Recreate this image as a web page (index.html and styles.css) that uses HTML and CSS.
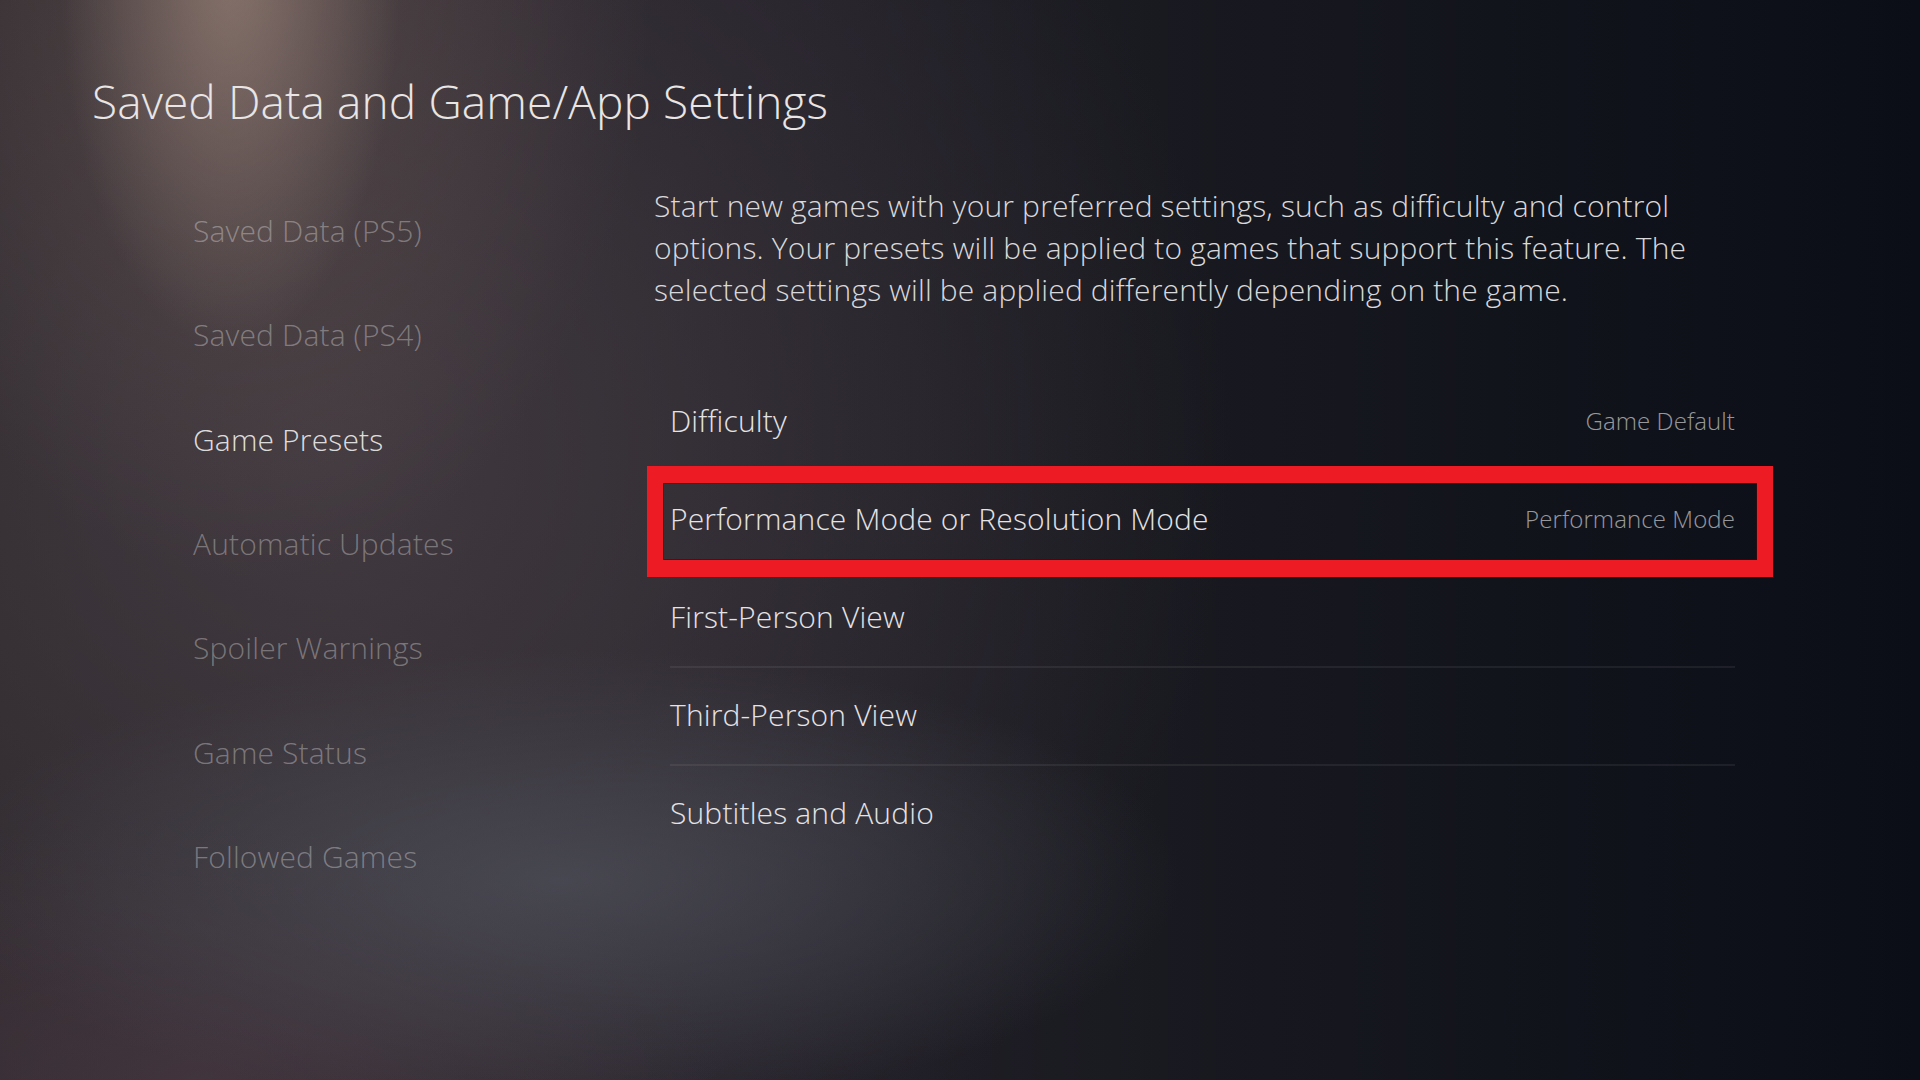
FILE: index.html
```html
<!DOCTYPE html>
<html lang="en">
<head>
<meta charset="utf-8">
<title>Saved Data and Game/App Settings</title>
<link rel="stylesheet" href="styles.css">
</head>
<body>
<div class="screen">
  <h1 class="title">Saved Data and Game/App Settings</h1>
  <div class="content">
    <nav class="side">
      <div class="side-item">Saved Data (PS5)</div>
      <div class="side-item">Saved Data (PS4)</div>
      <div class="side-item is-active">Game Presets</div>
      <div class="side-item">Automatic Updates</div>
      <div class="side-item">Spoiler Warnings</div>
      <div class="side-item">Game Status</div>
      <div class="side-item">Followed Games</div>
    </nav>
    <section class="main">
      <p class="desc">Start new games with your preferred settings, such as difficulty and control options. Your presets will be applied to games that support this feature. The selected settings will be applied differently depending on the game.</p>
      <ul class="rows">
        <li class="row"><span class="row-label">Difficulty</span><span class="row-value">Game Default</span></li>
        <li class="row is-focused"><span class="row-label">Performance Mode or Resolution Mode</span><span class="row-value">Performance Mode</span></li>
        <li class="row"><span class="row-label">First-Person View</span></li>
        <li class="row"><span class="row-label">Third-Person View</span></li>
        <li class="row"><span class="row-label">Subtitles and Audio</span></li>
      </ul>
    </section>
  </div>
</div>
</body>
</html>
```
FILE: styles.css
```css
html, body {
  margin: 0;
  padding: 0;
  width: 1920px;
  height: 1080px;
  overflow: hidden;
}

body {
  font-family: "Open Sans", "Noto Sans", sans-serif;
  font-weight: 300;
  color: #e6e4e4;
  background-color: #16161d;
  background-image:
    radial-gradient(ellipse 170px 380px at 230px -30px, rgba(165, 140, 128, 0.62), rgba(165, 140, 128, 0) 100%),
    radial-gradient(ellipse 400px 580px at 250px 0px, rgba(120, 100, 95, 0.42), rgba(120, 100, 95, 0) 100%),
    radial-gradient(ellipse 620px 230px at 560px 880px, rgba(78, 80, 90, 0.75), rgba(78, 80, 90, 0) 100%),
    radial-gradient(ellipse 520px 260px at 200px 1080px, rgba(72, 56, 66, 0.7), rgba(72, 56, 66, 0) 100%),
    radial-gradient(ellipse 900px 900px at 330px 450px, rgba(70, 62, 68, 0.8), rgba(70, 62, 68, 0) 100%),
    linear-gradient(90deg, #2a2529 0%, #2c272d 18%, #24212a 38%, #1a1a21 58%, #12141c 78%, #0b0e17 100%);
}

.screen {
  padding: 71px 0 0 92px;
}

.title {
  margin: 0;
  font-size: 46px;
  font-weight: 300;
  line-height: 60px;
  letter-spacing: 0.12px;
  color: #e8e5e4;
}

.content {
  display: flex;
  margin-top: 48px;
}

.side {
  margin-left: 101px;
  width: 461px;
  display: flex;
  flex-direction: column;
}

.side-item {
  height: 104.3px;
  display: flex;
  align-items: center;
  font-size: 30px;
  line-height: 42px;
  letter-spacing: 0.15px;
  color: rgba(255, 255, 255, 0.33);
  white-space: nowrap;
}

.side-item.is-active {
  color: rgba(255, 255, 255, 0.84);
}

.main {
  width: 1081px;
  padding-top: 5.5px;
}

.desc {
  margin: 0;
  font-size: 30px;
  line-height: 42px;
  letter-spacing: 0.15px;
  color: #d9d8da;
}

.rows {
  list-style: none;
  margin: 61px 0 0 16px;
  padding: 0;
}

.row {
  box-sizing: border-box;
  height: 98.2px;
  display: flex;
  align-items: center;
  justify-content: space-between;
  position: relative;
  box-shadow: 0 2px 0 0 rgba(255, 255, 255, 0.065);
}

.row:last-child {
  box-shadow: none;
}

.row-label {
  font-size: 30px;
  line-height: 42px;
  letter-spacing: 0.15px;
  color: #e4e3e5;
  white-space: nowrap;
}

.row-value {
  font-size: 24px;
  line-height: 34px;
  letter-spacing: 0.1px;
  color: rgba(255, 255, 255, 0.58);
  white-space: nowrap;
}

.row.is-focused::after {
  content: "";
  position: absolute;
  top: -4px;
  bottom: -9px;
  left: -23px;
  right: -38px;
  border-style: solid;
  border-color: #ed1c24;
  border-width: 17px 16px;
  box-shadow: inset 0 0 0 1px rgba(60, 10, 14, 0.6);
  pointer-events: none;
}
```
